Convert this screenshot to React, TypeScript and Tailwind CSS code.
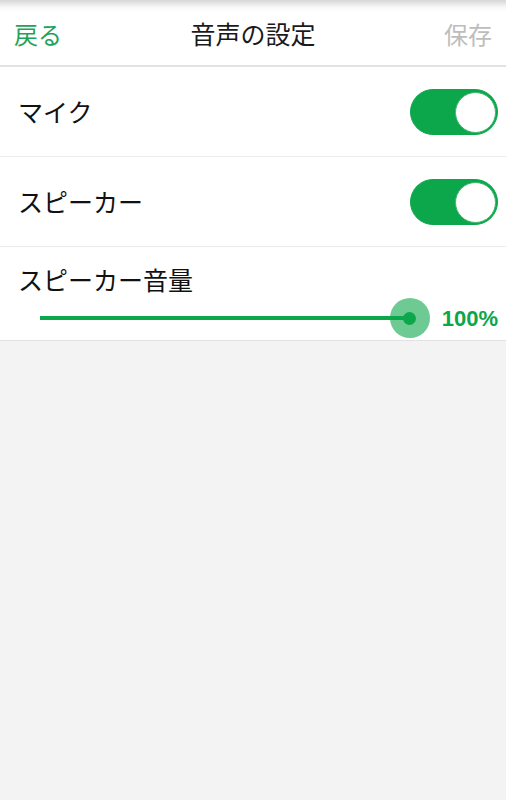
import { useState } from "react";

const font = { fontFamily: "'Noto Sans CJK JP', 'Noto Sans', sans-serif" };

function Toggle({ on, onChange }: { on: boolean; onChange: () => void }) {
  return (
    <button
      onClick={onChange}
      className={`relative w-[88px] h-[46px] rounded-full border transition-colors ${
        on ? "bg-[#0ca74b] border-[#0ca74b]" : "bg-[#e5e5e5] border-[#d5d5d5]"
      }`}
    >
      <span
        className={`absolute top-[2px] w-[41px] h-[41px] rounded-full bg-white border border-[#3fb56e] transition-all ${
          on ? "right-[1px]" : "left-[1px]"
        }`}
      />
    </button>
  );
}

export default function App() {
  const [mic, setMic] = useState(true);
  const [speaker, setSpeaker] = useState(true);

  return (
    <div className="w-full min-h-[800px] bg-[#f3f3f3]" style={font}>
      {/* Header */}
      <header className="h-[67px] flex items-center justify-between px-[14px] bg-[linear-gradient(to_bottom,#d6d6d6,#f7f7f7_7px,#ffffff_12px)] border-b-2 border-[#e2e2e2] relative">
        <span className="text-[24px] text-[#1ea35b] pt-[3px]">戻る</span>
        <span className="absolute left-1/2 -translate-x-1/2 text-[25px] text-[#1a1a1a] pt-[3px]">
          音声の設定
        </span>
        <span className="text-[24px] text-[#bdbdbd] pt-[3px]">保存</span>
      </header>

      {/* Settings list */}
      <div className="bg-white">
        <div className="h-[90px] flex items-center justify-between pl-[18px] pr-[8px] border-b border-[#ececec]">
          <span className="text-[25px] text-[#111]">マイク</span>
          <Toggle on={mic} onChange={() => setMic(!mic)} />
        </div>
        <div className="h-[90px] flex items-center justify-between pl-[18px] pr-[8px] border-b border-[#ececec]">
          <span className="text-[25px] text-[#111]">スピーカー</span>
          <Toggle on={speaker} onChange={() => setSpeaker(!speaker)} />
        </div>
        <div className="h-[94px] flex flex-col pt-[17px] border-b border-[#e2e2e2]">
          <span className="pl-[18px] text-[25px] leading-[30px] text-[#111]">スピーカー音量</span>
          <div className="mt-[4px] h-[40px] flex items-center pl-[40px] pr-[8px]">
            <div className="flex-1 h-[4px] bg-[#0ca74b] relative">
              <div className="absolute right-[-20px] top-1/2 -translate-y-1/2 w-[40px] h-[40px] rounded-full bg-[#0ca74b]/60 flex items-center justify-center">
                <div className="w-[13px] h-[13px] rounded-full bg-[#0ca74b]" />
              </div>
            </div>
            <span
              className="ml-[32px] text-[22px] font-bold text-[#0ca74b]"
              style={{ fontFamily: "'Liberation Sans', Arial, sans-serif" }}
            >
              100%
            </span>
          </div>
        </div>
      </div>
    </div>
  );
}
